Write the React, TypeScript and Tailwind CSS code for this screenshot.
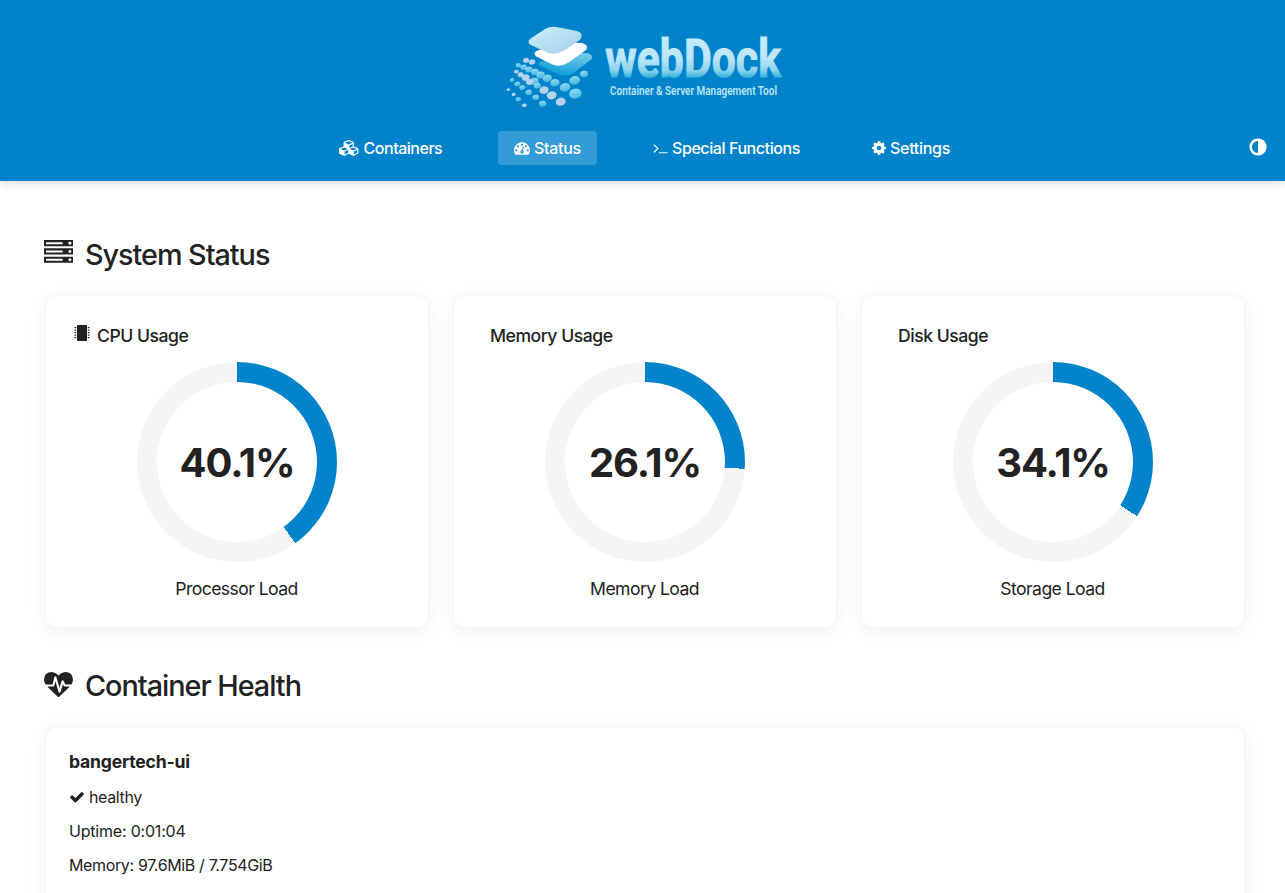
import React from "react";

type IconProps = { d: string; w?: number; className: string };

const Icon = ({ d, w = 1792, className }: IconProps) => (
  <svg viewBox={`0 0 ${w} 1792`} fill="currentColor" fillRule="evenodd" className={`shrink-0 ${className}`}>
    <path d={d} />
  </svg>
);

const CUBES =
  "M640 1632l384-192v-314l-384 164v342zm-64-454l404-173-404-173-404 173zm1088 454l384-192v-314l-384 164v342zm-64-454l404-173-404-173-404 173zm-448-293l384-165v-266l-384 164v267zm-64-379l441-189-441-189-441 189zm1088 518v416q0 36-19 67t-52 47l-448 224q-25 14-57 14t-57-14l-448-224q-4-2-7-4-2 2-7 4l-448 224q-25 14-57 14t-57-14l-448-224q-33-16-52-47t-19-67v-416q0-38 21.500-70t56.500-48l434-186v-400q0-38 21.500-70t56.500-48l448-192q23-10 50-10t50 10l448 192q35 16 56.500 48t21.500 70v400l434 186q36 16 57 48t21 70z";
const TACHO =
  "M384 1152q0-53-37.500-90.500t-90.500-37.500-90.500 37.500-37.500 90.500 37.500 90.500 90.500 37.500 90.500-37.500 37.500-90.500zm192-448q0-53-37.500-90.500t-90.500-37.500-90.500 37.500-37.500 90.500 37.500 90.500 90.500 37.500 90.500-37.500 37.500-90.500zm428 481l101-382q6-26-7.500-48.500t-38.500-29.500-48 6.500-30 39.500l-101 382q-60 5-107 43.500t-63 98.500q-20 77 20 146t117 89 146-20 89-117q16-60-6-117t-72-91zm660-33q0-53-37.500-90.500t-90.500-37.500-90.500 37.500-37.500 90.500 37.500 90.500 90.500 37.500 90.500-37.500 37.500-90.500zm-640-640q0-53-37.500-90.500t-90.500-37.500-90.500 37.500-37.500 90.500 37.500 90.500 90.500 37.500 90.500-37.500 37.500-90.500zm448 192q0-53-37.500-90.500t-90.500-37.500-90.500 37.500-37.500 90.500 37.500 90.500 90.500 37.500 90.500-37.500 37.500-90.500zm320 448q0 261-141 483-19 29-54 29h-1402q-35 0-54-29-141-221-141-483 0-182 71-348t191-286 286-191 348-71 348 71 286 191 191 286 71 348z";
const TERMINAL =
  "M649 983l-466 466q-10 10-23 10t-23-10l-50-50q-10-10-10-23t10-23l393-393-393-393q-10-10-10-23t10-23l50-50q10-10 23-10t23 10l466 466q10 10 10 23t-10 23zm1079 457v64q0 14-9 23t-23 9h-960q-14 0-23-9t-9-23v-64q0-14 9-23t23-9h960q14 0 23 9t9 23z";
const COG =
  "M1152 896q0-106-75-181t-181-75-181 75-75 181 75 181 181 75 181-75 75-181zm512-109v222q0 12-8 23t-20 13l-185 28q-19 54-39 91 35 50 107 138 10 12 10 25t-9 23q-27 37-99 108t-94 71q-12 0-26-9l-138-108q-44 23-91 38-16 136-29 186-7 28-36 28h-222q-14 0-24.500-8.500t-11.500-21.500l-28-184q-49-16-90-37l-141 107q-10 9-25 9-14 0-25-11-126-114-165-168-7-10-7-23 0-12 8-23 15-21 51-66.500t54-70.500q-27-50-41-99l-183-27q-13-2-21-12.500t-8-23.500v-222q0-12 8-23t19-13l186-28q14-46 39-92-40-57-107-138-10-12-10-24 0-10 9-23 26-36 98.500-107.500t94.500-71.500q13 0 26 10l138 107q44-23 91-38 16-136 29-186 7-28 36-28h222q14 0 24.500 8.500t11.500 21.500l28 184q49 16 90 37l142-107q9-9 24-9 13 0 25 10 129 119 165 170 7 8 7 22 0 12-8 23-15 21-51 66.500t-54 70.500q26 50 41 98l183 28q13 2 21 12.500t8 23.500z";
const ADJUST =
  "M896 1440v-1088q-148 0-273 73t-198 198-73 273 73 273 198 198 273 73zm768-544q0 209-103 385.500t-279.500 279.500-385.500 103-385.500-103-279.500-279.500-103-385.500 103-385.500 279.500-279.500 385.500-103 385.500 103 279.500 279.500 103 385.500z";
const SERVER =
  "M128 1408h1024v-128h-1024v128zm0-512h1024v-128h-1024v128zm1568 448q0-40-28-68t-68-28-68 28-28 68 28 68 68 28 68-28 28-68zm-1568-960h1024v-128h-1024v128zm1568 448q0-40-28-68t-68-28-68 28-28 68 28 68 68 28 68-28 28-68zm0-512q0-40-28-68t-68-28-68 28-28 68 28 68 68 28 68-28 28-68zm96 832v384h-1792v-384h1792zm0-512v384h-1792v-384h1792zm0-512v384h-1792v-384h1792z";
const HEARTBEAT =
  "M1280 1024h305q-5 6-10 10.500t-9 7.500l-3 4-623 600q-18 18-44 18t-44-18l-624-602q-5-2-21-20h369q22 0 39.500-13.500t22.500-34.500l70-281 190 667q6 20 23 33t39 13q21 0 38-13t23-33l146-485 56 112q18 35 57 35zm512-428q0 145-103 300h-369l-111-221q-8-17-25.500-27t-36.500-8q-45 5-56 46l-129 430-196-686q-6-20-23.500-33t-39.500-13-39 13.500-22 34.500l-116 464h-423q-103-155-103-300 0-220 127-344t351-124q62 0 126.500 21.500t120 58 95.500 68.500 76 68q36-36 76-68t95.500-68.500 120-58 126.500-21.500q224 0 351 124t127 344z";
const CHECK =
  "M1671 566q0 40-28 68l-724 724-136 136q-28 28-68 28t-68-28l-136-136-362-362q-28-28-28-68t28-68l136-136q28-28 68-28t68 28l294 295 656-657q28-28 68-28t68 28l136 136q28 28 28 68z";

type Dot = [number, number, number, number];
// cx, cy, rx, tone (0 = cyan, 1 = pale)
const DOTS: Dot[] = [
  [93, 136, 9, 1], [111, 141, 10, 1], [70, 151, 8, 0], [86, 157, 10, 0], [102, 164, 11, 0], [120, 171, 12, 0],
  [137, 180, 13, 0], [157, 190, 14, 0], [180, 203, 14, 0], [210, 217, 16, 0], [241, 236, 19, 0],
  [64, 170, 7, 1], [77, 179, 9, 1], [92, 188, 12, 1], [118, 199, 13, 0], [147, 225, 14, 1],
  [170, 241, 15, 1], [197, 260, 15, 1], [239, 196, 16, 0], [267, 177, 12, 0], [51, 195, 7, 0], [67, 207, 9, 0],
  [82, 218, 9, 0], [101, 232, 10, 0], [122, 247, 10, 0], [143, 266, 11, 0], [40, 224, 5, 1], [56, 238, 6, 1],
  [70, 253, 8, 0], [88, 271, 7, 1], [127, 212, 11, 0], [104, 201, 11, 1],
];

const Logo = () => (
  <svg viewBox="0 0 900 300" className="h-[100px] w-[300px]">
    <defs>
      <linearGradient id="word" gradientUnits="userSpaceOnUse" x1="0" y1="70" x2="0" y2="190">
        <stop offset="0" stopColor="#c6ebfc" />
        <stop offset="0.5" stopColor="#bbe6f9" />
        <stop offset="0.8" stopColor="#8fd3ee" />
        <stop offset="1" stopColor="#27aed6" />
      </linearGradient>
      <linearGradient id="top" x1="0" y1="0" x2="1" y2="1">
        <stop offset="0" stopColor="#cdeffc" />
        <stop offset="1" stopColor="#9fcfe8" />
      </linearGradient>
      <linearGradient id="base" x1="1" y1="0" x2="0.4" y2="1">
        <stop offset="0" stopColor="#7fd0ea" />
        <stop offset="1" stopColor="#0d9ed6" />
      </linearGradient>
      <linearGradient id="cyan" x1="0" y1="0" x2="0" y2="1">
        <stop offset="0" stopColor="#8fdcf2" />
        <stop offset="1" stopColor="#45b7de" />
      </linearGradient>
      <linearGradient id="pale" x1="0" y1="0" x2="1" y2="1">
        <stop offset="0" stopColor="#a6dcf0" />
        <stop offset="1" stopColor="#cbc9e6" />
      </linearGradient>
    </defs>
    {DOTS.map(([cx, cy, rx, tone], i) => (
      <ellipse key={i} cx={cx} cy={cy} rx={rx} ry={rx * 0.8} transform={`rotate(-12 ${cx} ${cy})`} fill={tone ? "url(#pale)" : "url(#cyan)"} />
    ))}
    <path d="M137 141 L200 112 L278 115 Q297 121 289 133 L238 172 Q218 187 195 180 L138 154 Q127 147 137 141Z" fill="url(#base)" />
    <path d="M124 108 L200 82 L262 84 Q281 90 274 104 L222 142 Q200 157 176 150 L125 125 Q112 117 124 108Z" fill="#fff" />
    <path d="M106 71 L150 42 Q164 34 184 36 L246 48 Q266 55 258 69 L254 75 L207 107 Q183 121 158 113 L108 90 Q94 82 106 71Z" fill="url(#top)" />
    <text x="331" y="187" textLength="527" lengthAdjust="spacingAndGlyphs" fill="url(#word)" stroke="url(#word)" strokeWidth="3" fontFamily="Roboto, sans-serif" fontWeight="700" fontSize="160">webDock</text>
    <text x="345" y="241" textLength="501" lengthAdjust="spacingAndGlyphs" fill="#b9e4f8" fontFamily="Roboto, sans-serif" fontWeight="600" fontSize="39">Container &amp; Server Management Tool</text>
  </svg>
);

const Gauge = ({ value }: { value: number }) => (
  <div
    className="flex h-[200px] w-[200px] items-center justify-center rounded-full"
    style={{ background: `conic-gradient(#0083cb ${value}%, #f5f5f5 ${value}%)` }}
  >
    <div className="flex h-40 w-40 items-center justify-center rounded-full bg-white pt-0.5">
      <span className="text-[40px] leading-none font-bold tracking-[-1.1px]">{value}%</span>
    </div>
  </div>
);

const Chip = () => (
  <svg viewBox="0 0 16 18" className="h-[18px] w-4 shrink-0" fill="currentColor">
    <rect x="3" y="1" width="10" height="16" rx="0.8" />
    {[3, 5.5, 8, 10.5, 13].map((y) => (
      <g key={y}>
        <rect x="0.5" y={y} width="1.7" height="1.2" />
        <rect x="13.8" y={y} width="1.7" height="1.2" />
      </g>
    ))}
  </svg>
);

const CARD = "rounded-xl border border-[#f5f5f5] bg-white shadow-[0_4px_20px_rgba(0,0,0,0.06)]";

const UsageCard = ({ title, value, label, chip }: { title: string; value: number; label: string; chip?: boolean }) => (
  <div className={`${CARD} flex h-[333px] flex-col items-center`}>
    <div className={`flex h-[66px] w-full items-start pt-[28px] ${chip ? "gap-[7px] pl-[28px]" : "pl-[36px]"}`}>
      {chip && <Chip />}
      <h3 className="text-[17.6px] leading-6 font-medium tracking-[-0.48px]">{title}</h3>
    </div>
    <Gauge value={value} />
    <p className="mt-[15px] pr-px text-[17.6px] leading-6 tracking-[-0.58px]">{label}</p>
  </div>
);

export default function App() {
  return (
    <div className="h-[893px] overflow-hidden bg-white font-['Inter',sans-serif] text-[#222]">
      <header className="flex h-[181px] flex-col bg-[#0083cb] pt-[15px] text-white shadow-[0_2px_10px_rgba(0,0,0,0.15)]">
        <div className="pl-[495px]">
          <Logo />
        </div>
        <div className="mt-4 flex h-[34px] items-center pl-[323px] text-base font-medium whitespace-nowrap">
          <nav className="flex h-full gap-10">
            <a className="flex w-[135px] items-center gap-1 pl-4 tracking-[-0.48px]">
              <Icon d={CUBES} w={2304} className="h-4 w-[20.570px]" />
              Containers
            </a>
            <a className="flex w-[99px] items-center gap-1 rounded bg-white/20 pl-4 tracking-[-0.3px]">
              <Icon d={TACHO} className="h-4 w-4" />
              Status
            </a>
            <a className="flex w-[179px] items-center gap-1 pl-4 tracking-[-0.42px]">
              <Icon d={TERMINAL} className="h-4 w-[15px]" />
              Special Functions
            </a>
            <a className="flex w-[110px] items-center gap-1 pl-4 tracking-[-0.3px]">
              <Icon d={COG} className="-mx-px h-4 w-4" />
              Settings
            </a>
          </nav>
          <button className="mb-0.5 ml-[281.500px]">
            <Icon d={ADJUST} className="h-5 w-5" />
          </button>
        </div>
      </header>
      <main className="w-[1245px] pl-[45px]">
        <h2 className="-ml-px flex h-[114px] items-start gap-3 pt-[56px] text-[28.8px] leading-9 font-medium tracking-[-1.04px]">
          <Icon d={SERVER} className="mt-px h-[29px] w-[29px]" />
          System Status
        </h2>
        <section className="grid grid-cols-3 gap-6">
          <UsageCard title="CPU Usage" value={40.1} label="Processor Load" chip />
          <UsageCard title="Memory Usage" value={26.1} label="Memory Load" />
          <UsageCard title="Disk Usage" value={34.1} label="Storage Load" />
        </section>
        <h2 className="-ml-px flex h-[98px] items-start gap-3 pt-[40px] text-[28.8px] leading-9 font-medium tracking-[-1.02px]">
          <Icon d={HEARTBEAT} className="mt-0.5 h-[29px] w-[29px]" />
          Container Health
        </h2>
        <section className={`${CARD} h-[240px] pt-[23px] pl-[23px] text-base leading-6 tracking-[-0.36px]`}>
          <h3 className="mb-[11px] text-[17.6px] font-bold tracking-[-0.22px]">bangertech-ui</h3>
          <p className="mb-2.5 flex items-center gap-1">
            <Icon d={CHECK} className="h-4 w-4" />
            healthy
          </p>
          <p className="mb-2.5 tracking-[-0.2px]">Uptime: 0:01:04</p>
          <p className="mb-2.5">Memory: 97.6MiB / 7.754GiB</p>
          <p>Status: healthy</p>
        </section>
      </main>
    </div>
  );
}
